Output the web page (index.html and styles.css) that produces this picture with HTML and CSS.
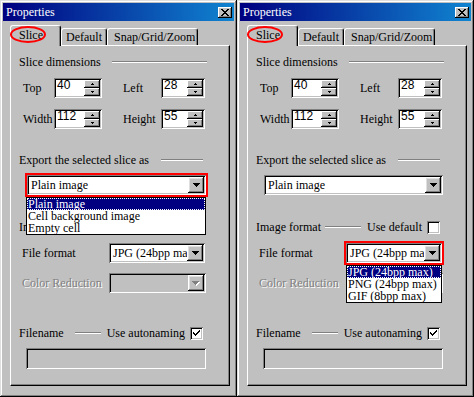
FILE: index.html
```html
<!doctype html>
<html>
<head>
    <meta charset="utf-8">
    <meta name="viewport" content="width=device-width, initial-scale=1">
    <title>Properties</title>
    <link rel="stylesheet" href="styles.css">
</head>
<body>
    <!-- left window: export type list open -->
    <div class="window">
        <div class="caption">
            <span>Properties</span>
            <span class="close-btn"><svg width="8" height="7" viewBox="0 0 8 7"><path d="M0 0h2v1h1v1h2v-1h1v-1h2v1h-1v1h-1v1h-1v1h1v1h1v1h1v1h-2v-1h-1v-1h-2v1h-1v1h-2v-1h1v-1h1v-1h1v-1h-1v-1h-1v-1h-1z"/></svg></span>
        </div>
        <div class="tabs">
            <div class="tab tab-slice active">Slice<span class="ring"></span></div>
            <div class="tab tab-default">Default</div>
            <div class="tab tab-snap">Snap/Grid/Zoom</div>
        </div>
        <div class="page">
            <div class="group-row row-dims"><span>Slice dimensions</span><i class="etch etch-dims"></i></div>
            <div class="spin-row row-top">
                <span class="spin-label">Top</span>
                <div class="spinner spinner-wide"><span class="spin-value">40</span><span class="spin-btns"><b class="spin-btn"><svg width="3" height="2"><path d="M1 0h1v1h1v1h-3v-1h1z"/></svg></b><b class="spin-btn"><svg width="3" height="2"><path d="M0 0h3v1h-1v1h-1v-1h-1z"/></svg></b></span></div>
                <span class="spin-label spin-label-right">Left</span>
                <div class="spinner"><span class="spin-value">28</span><span class="spin-btns"><b class="spin-btn"><svg width="3" height="2"><path d="M1 0h1v1h1v1h-3v-1h1z"/></svg></b><b class="spin-btn"><svg width="3" height="2"><path d="M0 0h3v1h-1v1h-1v-1h-1z"/></svg></b></span></div>
            </div>
            <div class="spin-row row-width">
                <span class="spin-label">Width</span>
                <div class="spinner spinner-wide"><span class="spin-value">112</span><span class="spin-btns"><b class="spin-btn"><svg width="3" height="2"><path d="M1 0h1v1h1v1h-3v-1h1z"/></svg></b><b class="spin-btn"><svg width="3" height="2"><path d="M0 0h3v1h-1v1h-1v-1h-1z"/></svg></b></span></div>
                <span class="spin-label spin-label-right">Height</span>
                <div class="spinner"><span class="spin-value">55</span><span class="spin-btns"><b class="spin-btn"><svg width="3" height="2"><path d="M1 0h1v1h1v1h-3v-1h1z"/></svg></b><b class="spin-btn"><svg width="3" height="2"><path d="M0 0h3v1h-1v1h-1v-1h-1z"/></svg></b></span></div>
            </div>
            <div class="group-row row-export"><span>Export the selected slice as</span><i class="etch etch-export"></i></div>
            <div class="combo-row row-combo">
                <div class="combo combo-export marked open">
                    <span class="combo-text">Plain image</span>
                    <span class="combo-btn"><svg width="7" height="4"><path d="M0 0h7v1h-1v1h-1v1h-1v1h-1v-1h-1v-1h-1v-1h-1z"/></svg></span>
                    <div class="droplist droplist-export">
                        <div class="item selected">Plain image</div>
                        <div class="item">Cell background image</div>
                        <div class="item">Empty cell</div>
                    </div>
                </div>
            </div>
            <div class="group-row row-format"><span>Image format</span><i class="etch etch-format"></i><span class="push">Use default</span><span class="check"></span></div>
            <div class="combo-row row-file">
                <span class="field-label">File format</span>
                <div class="combo combo-small">
                    <span class="combo-text">JPG (24bpp max)</span>
                    <span class="combo-btn"><svg width="7" height="4"><path d="M0 0h7v1h-1v1h-1v1h-1v1h-1v-1h-1v-1h-1v-1h-1z"/></svg></span>
                </div>
            </div>
            <div class="combo-row row-color">
                <span class="field-label disabled">Color Reduction</span>
                <div class="combo combo-small combo-disabled">
                    <span class="combo-text"></span>
                    <span class="combo-btn"><svg width="8" height="5"><path fill="#fff" d="M1 1h7v1h-1v1h-1v1h-1v1h-1v-1h-1v-1h-1v-1h-1z"/><path fill="#808080" d="M0 0h7v1h-1v1h-1v1h-1v1h-1v-1h-1v-1h-1v-1h-1z"/></svg></span>
                </div>
            </div>
            <div class="group-row row-filename"><span>Filename</span><i class="etch etch-filename"></i><span class="push">Use autonaming</span><span class="check"><svg width="9" height="9" viewBox="0 0 9 9"><path d="M1 3v2l2 2 5-5V0L3 5z"/></svg></span></div>
            <div class="field"></div>
        </div>
    </div>

    <!-- right window: file format list open -->
    <div class="window">
        <div class="caption">
            <span>Properties</span>
            <span class="close-btn"><svg width="8" height="7" viewBox="0 0 8 7"><path d="M0 0h2v1h1v1h2v-1h1v-1h2v1h-1v1h-1v1h-1v1h1v1h1v1h1v1h-2v-1h-1v-1h-2v1h-1v1h-2v-1h1v-1h1v-1h1v-1h-1v-1h-1v-1h-1z"/></svg></span>
        </div>
        <div class="tabs">
            <div class="tab tab-slice active">Slice<span class="ring"></span></div>
            <div class="tab tab-default">Default</div>
            <div class="tab tab-snap">Snap/Grid/Zoom</div>
        </div>
        <div class="page">
            <div class="group-row row-dims"><span>Slice dimensions</span><i class="etch etch-dims"></i></div>
            <div class="spin-row row-top">
                <span class="spin-label">Top</span>
                <div class="spinner spinner-wide"><span class="spin-value">40</span><span class="spin-btns"><b class="spin-btn"><svg width="3" height="2"><path d="M1 0h1v1h1v1h-3v-1h1z"/></svg></b><b class="spin-btn"><svg width="3" height="2"><path d="M0 0h3v1h-1v1h-1v-1h-1z"/></svg></b></span></div>
                <span class="spin-label spin-label-right">Left</span>
                <div class="spinner"><span class="spin-value">28</span><span class="spin-btns"><b class="spin-btn"><svg width="3" height="2"><path d="M1 0h1v1h1v1h-3v-1h1z"/></svg></b><b class="spin-btn"><svg width="3" height="2"><path d="M0 0h3v1h-1v1h-1v-1h-1z"/></svg></b></span></div>
            </div>
            <div class="spin-row row-width">
                <span class="spin-label">Width</span>
                <div class="spinner spinner-wide"><span class="spin-value">112</span><span class="spin-btns"><b class="spin-btn"><svg width="3" height="2"><path d="M1 0h1v1h1v1h-3v-1h1z"/></svg></b><b class="spin-btn"><svg width="3" height="2"><path d="M0 0h3v1h-1v1h-1v-1h-1z"/></svg></b></span></div>
                <span class="spin-label spin-label-right">Height</span>
                <div class="spinner"><span class="spin-value">55</span><span class="spin-btns"><b class="spin-btn"><svg width="3" height="2"><path d="M1 0h1v1h1v1h-3v-1h1z"/></svg></b><b class="spin-btn"><svg width="3" height="2"><path d="M0 0h3v1h-1v1h-1v-1h-1z"/></svg></b></span></div>
            </div>
            <div class="group-row row-export"><span>Export the selected slice as</span><i class="etch etch-export"></i></div>
            <div class="combo-row row-combo">
                <div class="combo combo-export">
                    <span class="combo-text">Plain image</span>
                    <span class="combo-btn"><svg width="7" height="4"><path d="M0 0h7v1h-1v1h-1v1h-1v1h-1v-1h-1v-1h-1v-1h-1z"/></svg></span>
                </div>
            </div>
            <div class="group-row row-format"><span>Image format</span><i class="etch etch-format"></i><span class="push">Use default</span><span class="check"></span></div>
            <div class="combo-row row-file">
                <span class="field-label">File format</span>
                <div class="combo combo-small marked open">
                    <span class="combo-text">JPG (24bpp max)</span>
                    <span class="combo-btn"><svg width="7" height="4"><path d="M0 0h7v1h-1v1h-1v1h-1v1h-1v-1h-1v-1h-1v-1h-1z"/></svg></span>
                    <div class="droplist droplist-format">
                        <div class="item selected">JPG (24bpp max)</div>
                        <div class="item">PNG (24bpp max)</div>
                        <div class="item">GIF (8bpp max)</div>
                    </div>
                </div>
            </div>
            <div class="combo-row row-color">
                <span class="field-label disabled">Color Reduction</span>
                <div class="combo combo-small combo-disabled">
                    <span class="combo-text"></span>
                    <span class="combo-btn"><svg width="8" height="5"><path fill="#fff" d="M1 1h7v1h-1v1h-1v1h-1v1h-1v-1h-1v-1h-1v-1h-1z"/><path fill="#808080" d="M0 0h7v1h-1v1h-1v1h-1v1h-1v-1h-1v-1h-1v-1h-1z"/></svg></span>
                </div>
            </div>
            <div class="group-row row-filename"><span>Filename</span><i class="etch etch-filename"></i><span class="push">Use autonaming</span><span class="check"><svg width="9" height="9" viewBox="0 0 9 9"><path d="M1 3v2l2 2 5-5V0L3 5z"/></svg></span></div>
            <div class="field"></div>
        </div>
    </div>
</body>
</html>
```

FILE: styles.css
```css
body {
    margin: 0;
    display: flex;
    font-family: "Liberation Serif", "Times New Roman", serif;
    font-size: 12px;
    color: #000;
    background-color: #c0c0c0;
}
svg {
    display: block;
    shape-rendering: crispEdges;
}
.window {
    width: 237px;
    height: 397px;
    box-sizing: border-box;
    padding: 3px;
    background-color: #c0c0c0;
    box-shadow: inset -1px -1px #000, inset 1px 1px #dfdfdf, inset -2px -2px #808080, inset 2px 2px #fff;
}
.caption {
    height: 18px;
    display: flex;
    align-items: center;
    justify-content: space-between;
    padding: 0 2px 0 3px;
    background: linear-gradient(to right, #000080, #1084d0);
    color: #fff;
}
.close-btn {
    width: 14px;
    height: 11px;
    display: flex;
    align-items: center;
    justify-content: center;
    background-color: #c0c0c0;
    box-shadow: inset -1px -1px #000, inset 1px 1px #fff, inset -2px -2px #808080;
}
.tabs {
    display: flex;
    align-items: flex-end;
    height: 20px;
    margin: 4px 0 0 7px;
}
.tab {
    box-sizing: border-box;
    height: 17px;
    line-height: 14px;
    padding-top: 1px;
    border-left: 1px solid #fff;
    border-top: 1px solid #fff;
    border-right: 1px solid #000;
    border-radius: 3px 3px 0 0;
    box-shadow: inset -1px 0 #808080;
    background-color: #c0c0c0;
}
.tab.active {
    position: relative;
    z-index: 1;
    height: 21px;
    margin-bottom: -1px;
    padding-top: 2px;
}
.tab-slice {
    width: 51px;
    padding-left: 8px;
}
.tab-default {
    width: 46px;
    padding-left: 4px;
}
.tab-snap {
    width: 91px;
    padding-left: 6px;
}
.ring {
    position: absolute;
    left: -1px;
    top: 0;
    width: 36px;
    height: 17px;
    box-sizing: border-box;
    border: 2px solid #f00;
    border-radius: 50%;
}
.page {
    position: relative;
    box-sizing: border-box;
    width: 220px;
    height: 341px;
    margin-left: 7px;
    padding: 0 22px 0 8px;
    border: 1px solid;
    border-color: #fff #000 #000 #fff;
    box-shadow: inset -1px -1px #808080;
}
.group-row {
    display: flex;
    align-items: center;
    height: 14px;
    line-height: 14px;
    white-space: nowrap;
}
.etch {
    display: block;
    height: 0;
    border-top: 1px solid #808080;
    border-bottom: 1px solid #fff;
}
.row-dims { margin-top: 9px; }
.row-export { margin-top: 24px; }
.row-format { margin-top: 25px; }
.row-filename { margin-top: 33px; }
.etch-dims {
    flex: 1;
    margin-left: 11px;
}
.etch-export {
    width: 42px;
    margin: 0 4px 0 auto;
}
.etch-format {
    width: 36px;
    margin-left: 4px;
}
.etch-filename {
    width: 26px;
    margin-left: 11px;
}
.push {
    margin-left: auto;
}
.check {
    width: 13px;
    height: 13px;
    box-sizing: border-box;
    margin: 0 4px 0 5px;
    padding: 2px;
    background-color: #fff;
    box-shadow: inset 1px 1px #808080, inset -1px -1px #fff, inset 2px 2px #000, inset -2px -2px #c0c0c0;
}
.spin-row {
    display: flex;
    align-items: center;
    height: 20px;
}
.row-top { margin-top: 9px; }
.row-width { margin-top: 11px; }
.spin-label {
    width: 35px;
    padding-left: 4px;
    box-sizing: border-box;
}
.spin-label-right {
    width: 38px;
    margin-left: 21px;
    padding-left: 0;
}
.spinner {
    display: flex;
    width: 44px;
    height: 20px;
    box-sizing: border-box;
    padding: 2px;
    background-color: #fff;
    box-shadow: inset 1px 1px #808080, inset -1px -1px #fff, inset 2px 2px #000, inset -2px -2px #c0c0c0;
}
.spinner-wide {
    width: 48px;
}
.spin-value {
    flex: 1;
    padding-left: 1px;
    font-family: "Liberation Sans", Arial, sans-serif;
    font-size: 12px;
    line-height: 10px;
}
.spin-btns {
    width: 16px;
    display: flex;
    flex-direction: column;
}
.spin-btn {
    flex: 1;
    display: flex;
    align-items: center;
    justify-content: center;
    background-color: #c0c0c0;
    box-shadow: inset -1px -1px #000, inset 1px 1px #fff, inset -2px -2px #808080;
}
.combo-row {
    display: flex;
    align-items: center;
    height: 20px;
}
.row-combo { margin-top: 8px; }
.row-file { margin-top: 9px; }
.row-color { margin-top: 10px; }
.field-label {
    width: 90px;
    padding-left: 3px;
    box-sizing: border-box;
    white-space: nowrap;
}
.disabled {
    color: #808080;
    text-shadow: 1px 1px #fff;
}
.combo {
    position: relative;
    display: flex;
    height: 20px;
    box-sizing: border-box;
    padding: 2px;
    background-color: #fff;
    box-shadow: inset 1px 1px #808080, inset -1px -1px #fff, inset 2px 2px #000, inset -2px -2px #c0c0c0;
}
.combo-export {
    width: 179px;
    margin-left: 8px;
}
.combo-small {
    width: 96px;
}
.combo-disabled {
    width: 97px;
    background-color: #c0c0c0;
}
.combo.marked {
    outline: 2px solid #f00;
}
.combo.open {
    z-index: 2;
}
.combo-text {
    flex: 1;
    overflow: hidden;
    white-space: nowrap;
    padding-left: 2px;
    line-height: 16px;
}
.combo-btn {
    width: 16px;
    flex: none;
    display: flex;
    align-items: center;
    justify-content: center;
    background-color: #c0c0c0;
    box-shadow: inset -1px -1px #000, inset 1px 1px #fff, inset -2px -2px #808080, inset 2px 2px #dfdfdf;
}
.droplist {
    position: absolute;
    top: calc(100% + 2px);
    box-sizing: border-box;
    border: 1px solid #000;
    background-color: #fff;
}
.droplist-export {
    left: -1px;
    width: 180px;
}
.droplist-format {
    left: 0;
    width: 96px;
}
.item {
    line-height: 12px;
    padding-left: 1px;
    white-space: nowrap;
}
.item.selected {
    background-color: #000080;
    color: #fff;
    outline: 1px dotted #fff;
    outline-offset: -1px;
}
.field {
    width: 180px;
    height: 21px;
    box-sizing: border-box;
    margin: 8px 0 0 7px;
    background-color: #c0c0c0;
    box-shadow: inset 1px 1px #808080, inset -1px -1px #fff, inset 2px 2px #000, inset -2px -2px #c0c0c0;
}
```
